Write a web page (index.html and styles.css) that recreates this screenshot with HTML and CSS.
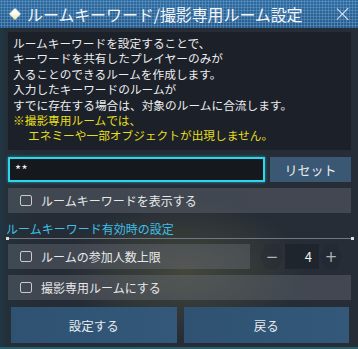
FILE: index.html
```html
<!DOCTYPE html>
<html lang="ja">
<head>
<meta charset="utf-8">
<link rel="stylesheet" href="styles.css">
</head>
<body>
<div class="window">
  <div class="titlebar">
    <span class="diamond"></span>
    <span class="title">ルームキーワード/撮影専用ルーム設定</span>
    <span class="close"></span>
  </div>
  <div class="content">
    <div class="desc">
      <p>ルームキーワードを設定することで、<br>キーワードを共有したプレイヤーのみが<br>入ることのできるルームを作成します。<br>入力したキーワードのルームが<br>すでに存在する場合は、対象のルームに合流します。</p>
      <p class="warn">※撮影専用ルームでは、<br><span class="indent">エネミーや一部オブジェクトが出現しません。</span></p>
    </div>
    <div class="input-row">
      <div class="input">**</div>
      <div class="btn reset">リセット</div>
    </div>
    <div class="row"><span class="check"></span><span>ルームキーワードを表示する</span></div>
    <div class="section">ルームキーワード有効時の設定</div>
    <div class="limit-row">
      <div class="row grow"><span class="check"></span><span>ルームの参加人数上限</span></div>
      <div class="stepper">
        <span class="step">−</span>
        <span class="num">4</span>
        <span class="step">+</span>
      </div>
    </div>
    <div class="row"><span class="check"></span><span>撮影専用ルームにする</span></div>
    <div class="buttons">
      <div class="btn big">設定する</div>
      <div class="btn big">戻る</div>
    </div>
  </div>
</div>
</body>
</html>
```
FILE: styles.css
```css
html, body {
  margin: 0;
  padding: 0;
  background: #1b2028;
}
body {
  font-family: "Noto Sans CJK JP", "Noto Sans", sans-serif;
  color: #e4e6e8;
}
.window {
  width: 358px;
  height: 349px;
  box-sizing: border-box;
  position: relative;
  overflow: hidden;
  background:
    radial-gradient(ellipse 120px 70px at 185px 270px, rgba(120, 120, 70, 0.35), rgba(120,120,70,0) 100%),
    linear-gradient(90deg, #1f3645 0px, #243039 6px, #262c35 40px, #272d36 100%);
  border-bottom: 2px solid #2b5f6e;
}
.titlebar {
  height: 28px;
  display: flex;
  align-items: center;
  padding-left: 10px;
  box-sizing: border-box;
  background-color: #2a6192;
  background-image:
    radial-gradient(circle, rgba(120, 175, 225, 0.55) 0.9px, rgba(0,0,0,0) 1.2px),
    linear-gradient(180deg, #2f6a9c 0%, #285b8a 100%);
  background-size: 3px 3px, 100% 100%;
  position: relative;
}
.diamond {
  width: 8px;
  height: 8px;
  transform: rotate(45deg);
  background: linear-gradient(135deg, #ffffff 30%, #f3e6a8 100%);
  margin-right: 8px;
  margin-left: 1px;
  box-shadow: 0 0 2px rgba(255,255,255,0.6);
}
.title {
  font-size: 16px;
  color: #f2f4f6;
  letter-spacing: -0.1px;
  line-height: 1;
}
.close {
  position: absolute;
  left: 337px;
  top: 8px;
  width: 12px;
  height: 12px;
}
.close::before, .close::after {
  content: "";
  position: absolute;
  left: 5px;
  top: -2px;
  width: 1.4px;
  height: 16px;
  background: #e8eef4;
  transform: rotate(45deg);
}
.close::after { transform: rotate(-45deg); }
.content {
  padding: 4px 7px 0 8px;
  display: flex;
  flex-direction: column;
}
.desc {
  background: #1c2028;
  height: 118px;
  box-sizing: border-box;
  padding: 3px 0 0 5px;
  font-size: 11.7px;
  line-height: 15.4px;
  color: #eceef0;
}
.desc p { margin: 0; }
.warn { color: #e6df1c; }
.indent { padding-left: 15px; }
.input-row {
  display: flex;
  margin-top: 7px;
  height: 25px;
  gap: 5px;
}
.input {
  width: 257px;
  box-sizing: border-box;
  border: 2px solid #2bd6ee;
  box-shadow: 0 0 3px rgba(43, 214, 238, 0.6);
  background: #15181d;
  font-size: 13px;
  line-height: 21px;
  padding-left: 5px;
  color: #f0f0f0;
  letter-spacing: 0.5px;
}
.btn {
  background: #385674;
  display: flex;
  align-items: center;
  justify-content: center;
  color: #e8ecef;
  font-size: 12.5px;
}
.reset {
  flex: 1;
  background: #3a5874;
  font-size: 13px;
}
.row {
  height: 25px;
  margin-top: 6px;
  display: flex;
  align-items: center;
  background: rgba(110, 116, 126, 0.38);
  font-size: 12px;
  padding-left: 12px;
  color: #e6e8ea;
}
.check {
  width: 9.5px;
  height: 9.5px;
  border: 1.5px solid #c7cbd0;
  border-radius: 2px;
  margin-right: 9.5px;
  flex: none;
}
.section {
  margin: 8px -3px 0 -2px;
  font-size: 12px;
  color: #3dbfe6;
  line-height: 16px;
  height: 16px;
  border-bottom: 1px solid #6f7780;
  position: relative;
  padding-bottom: 1px;
}
.section::before, .section::after {
  content: "";
  position: absolute;
  bottom: -2px;
  width: 3px;
  height: 3px;
  background: #d8dde2;
}
.section::before { left: 0; }
.section::after { right: 0; }
.limit-row {
  display: flex;
  margin-top: 5px;
  height: 25px;
}
.limit-row .row { margin-top: 0; }
.grow { width: 242px; box-sizing: border-box; }
.stepper {
  display: flex;
  align-items: stretch;
  margin-left: 14px;
}
.step {
  width: 22px;
  display: flex;
  align-items: center;
  justify-content: center;
  color: #aeb3b8;
  font-size: 15px;
  font-family: "DejaVu Sans", sans-serif;
  background: rgba(20, 26, 33, 0.12);
  clip-path: polygon(25% 0, 75% 0, 100% 50%, 75% 100%, 25% 100%, 0 50%);
}
.step:first-child { margin-left: -4px; width: 24px; }
.num {
  width: 34px;
  background: #1f252d;
  box-sizing: border-box;
  text-align: right;
  padding-right: 7px;
  font-size: 13px;
  line-height: 25px;
  color: #eef0f2;
  margin: 0 1px;
}
.buttons {
  display: flex;
  gap: 7px;
  margin-top: 7px;
  padding: 0 2px 0 3px;
}
.big {
  flex: 1;
  height: 36px;
  background: linear-gradient(90deg, #2f5272 0%, #335879 100%);
  font-size: 12.5px;
}
```
